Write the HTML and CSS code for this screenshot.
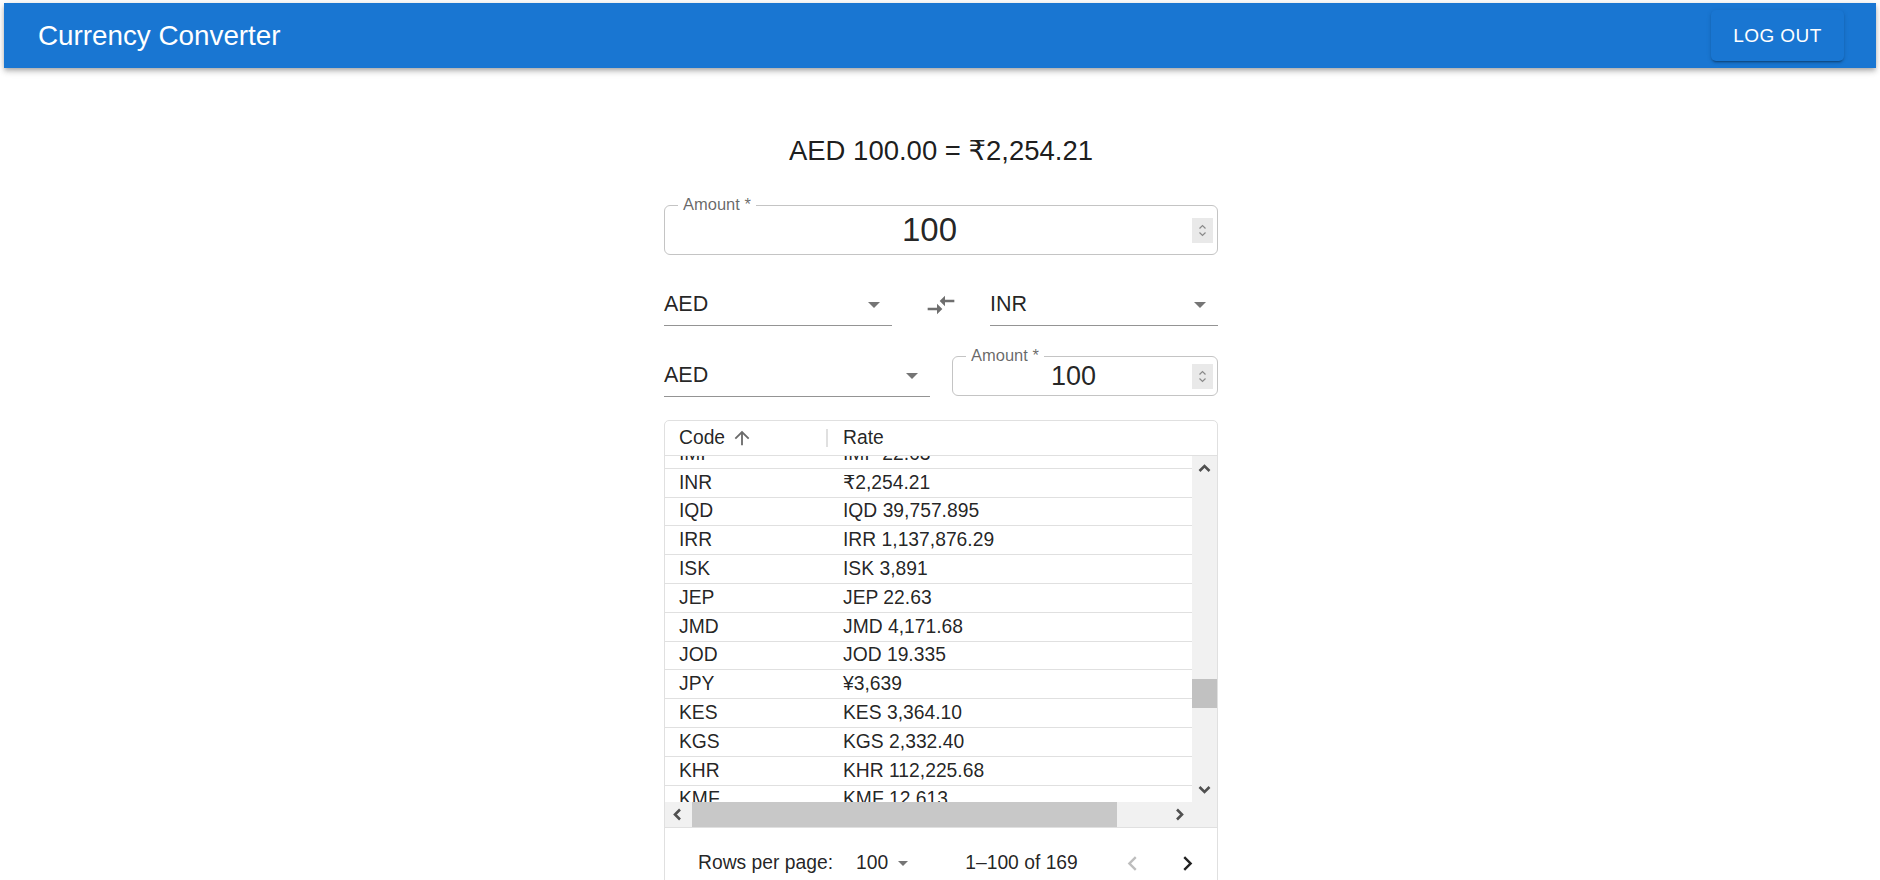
FILE: index.html
```html
<!DOCTYPE html>
<html lang="en">
<head>
<meta charset="utf-8">
<title>Currency Converter</title>
<link rel="stylesheet" href="styles.css">
</head>
<body>
<header class="appbar">
  <div class="title">Currency Converter</div>
  <button class="logout">LOG OUT</button>
</header>
<main class="page">
  <section class="converter">
    <h1 class="result">AED 100.00 = ₹2,254.21</h1>

    <div class="field field-lg">
      <span class="field-label">Amount *</span>
      <span class="field-value">100</span>
      <svg class="spinner" viewBox="0 0 21 25"><rect width="21" height="25" fill="#e9e9e9"/><path d="M7.5 10.5 L10.5 7.5 L13.5 10.5" fill="none" stroke="#8a8a8a" stroke-width="1.2"/><path d="M7.5 14.5 L10.5 17.5 L13.5 14.5" fill="none" stroke="#8a8a8a" stroke-width="1.2"/></svg>
    </div>

    <div class="pair">
      <div class="select"><span class="val">AED</span><span class="caret"></span></div>
      <div class="swap"><svg viewBox="0 0 24 24"><path d="M9.01 14H2v2h7.01v3L13 15l-3.99-4v3zm5.98-1v-3H22V8h-7.01V5L11 9l3.99 4z"/></svg></div>
      <div class="select"><span class="val">INR</span><span class="caret"></span></div>
    </div>

    <div class="row3">
      <div class="select"><span class="val">AED</span><span class="caret"></span></div>
      <div class="field field-sm">
        <span class="field-label">Amount *</span>
        <span class="field-value">100</span>
        <svg class="spinner" viewBox="0 0 21 25"><rect width="21" height="25" fill="#e9e9e9"/><path d="M7.5 10.5 L10.5 7.5 L13.5 10.5" fill="none" stroke="#8a8a8a" stroke-width="1.2"/><path d="M7.5 14.5 L10.5 17.5 L13.5 14.5" fill="none" stroke="#8a8a8a" stroke-width="1.2"/></svg>
      </div>
    </div>

    <div class="grid">
      <div class="grid-head">
        <div class="hcell-code">Code<svg class="sort" viewBox="0 0 24 24"><path d="M4 12l1.41 1.41L11 7.83V20h2V7.83l5.58 5.59L20 12l-8-8-8 8z"/></svg></div>
        <span class="sep"></span>
        <div class="hcell-rate">Rate</div>
      </div>
      <div class="grid-body">
        <div class="viewport">
          <div class="rows">
            <div class="row"><span class="c1">IMP</span><span class="c2">IMP 22.63</span></div>
            <div class="row"><span class="c1">INR</span><span class="c2">₹2,254.21</span></div>
            <div class="row"><span class="c1">IQD</span><span class="c2">IQD 39,757.895</span></div>
            <div class="row"><span class="c1">IRR</span><span class="c2">IRR 1,137,876.29</span></div>
            <div class="row"><span class="c1">ISK</span><span class="c2">ISK 3,891</span></div>
            <div class="row"><span class="c1">JEP</span><span class="c2">JEP 22.63</span></div>
            <div class="row"><span class="c1">JMD</span><span class="c2">JMD 4,171.68</span></div>
            <div class="row"><span class="c1">JOD</span><span class="c2">JOD 19.335</span></div>
            <div class="row"><span class="c1">JPY</span><span class="c2">¥3,639</span></div>
            <div class="row"><span class="c1">KES</span><span class="c2">KES 3,364.10</span></div>
            <div class="row"><span class="c1">KGS</span><span class="c2">KGS 2,332.40</span></div>
            <div class="row"><span class="c1">KHR</span><span class="c2">KHR 112,225.68</span></div>
            <div class="row"><span class="c1">KMF</span><span class="c2">KMF 12,613</span></div>
            <div class="row"><span class="c1">KPW</span><span class="c2">KPW 24,502.7</span></div>
          </div>
        </div>
        <div class="vscroll">
          <svg class="sb-btn" viewBox="0 0 25 25"><polyline points="7.5,15 12.5,10 17.5,15" fill="none" stroke="#505050" stroke-width="2.6"/></svg>
          <div class="vtrack"><div class="vthumb"></div></div>
          <svg class="sb-btn" viewBox="0 0 25 25"><polyline points="7.5,10 12.5,15 17.5,10" fill="none" stroke="#505050" stroke-width="2.6"/></svg>
        </div>
        <div class="hscroll">
          <svg class="sb-btn" viewBox="0 0 25 25"><polyline points="15,7.5 10,12.5 15,17.5" fill="none" stroke="#505050" stroke-width="2.6"/></svg>
          <div class="htrack"><div class="hthumb"></div></div>
          <svg class="sb-btn" viewBox="0 0 25 25"><polyline points="10,7.5 15,12.5 10,17.5" fill="none" stroke="#505050" stroke-width="2.6"/></svg>
        </div>
        <div class="corner"></div>
      </div>
      <div class="grid-foot">
        <span class="rpp">Rows per page:</span>
        <span class="page-select">100<span class="caret caret-sm"></span></span>
        <span class="shown">1–100 of 169</span>
        <span class="pbtn disabled"><svg viewBox="0 0 24 24"><path d="M15.41 7.41 14 6l-6 6 6 6 1.41-1.41L10.83 12z"/></svg></span>
        <span class="pbtn"><svg viewBox="0 0 24 24"><path d="M10 6 8.59 7.41 13.17 12l-4.58 4.59L10 18l6-6z"/></svg></span>
      </div>
    </div>
  </section>
</main>
</body>
</html>
```

FILE: styles.css
```css
html, body {
  margin: 0;
  padding: 0;
  overflow: hidden;
  background: #fff;
}

body {
  font-family: "Liberation Sans", Arial, "DejaVu Sans", sans-serif;
  color: rgba(0, 0, 0, 0.87);
}

.appbar {
  margin: 3px 4px 0;
  height: 65px;
  box-sizing: border-box;
  padding: 0 32px 0 34px;
  background: #1976d2;
  color: #fff;
  display: flex;
  align-items: center;
  justify-content: space-between;
  box-shadow: 0 2px 4px -1px rgba(0,0,0,.2), 0 4px 5px 0 rgba(0,0,0,.14), 0 1px 10px 0 rgba(0,0,0,.12);
}

.title {
  font-size: 27.8px;
  line-height: 32px;
}

.logout {
  font-family: inherit;
  font-size: 19px;
  letter-spacing: 0.4px;
  color: #fff;
  background: #1976d2;
  border: 0;
  border-radius: 5px;
  width: 133px;
  height: 51px;
  padding: 0;
  box-shadow: 0 3px 1px -2px rgba(0,0,0,.2), 0 2px 2px 0 rgba(0,0,0,.14), 0 1px 5px 0 rgba(0,0,0,.12);
}

.page {
  display: flex;
  justify-content: center;
  padding-top: 67px;
  padding-left: 2px;
}

.converter {
  width: 554px;
  display: flex;
  flex-direction: column;
}

.result {
  margin: 0;
  font-size: 27.5px;
  font-weight: 400;
  line-height: 32px;
  text-align: center;
  color: rgba(0, 0, 0, 0.9);
}

/* outlined number field */
.field {
  position: relative;
  box-sizing: border-box;
  border: 1px solid #c4c4c4;
  border-radius: 6px;
  display: flex;
  align-items: center;
  padding: 0 4px 0 14px;
}

.field-lg {
  margin-top: 38px;
  height: 50px;
}

.field-sm {
  height: 40px;
}

.field-label {
  position: absolute;
  top: -11px;
  left: 13px;
  padding: 0 5px;
  background: #fff;
  font-size: 16.5px;
  line-height: 18px;
  color: rgba(0, 0, 0, 0.6);
}

.field-value {
  flex: 1;
  text-align: center;
  margin-right: 12px;
}

.field-lg .field-value {
  font-size: 33px;
}

.field-sm .field-value {
  font-size: 27px;
}

.spinner {
  width: 21px;
  height: 25px;
  display: block;
}

/* standard selects */
.select {
  display: flex;
  align-items: center;
  line-height: 29px;
  padding-bottom: 6px;
  border-bottom: 1px solid rgba(0, 0, 0, 0.42);
  font-size: 21.5px;
}

.select .val {
  flex: 1;
}

.caret {
  width: 0;
  height: 0;
  border-left: 6px solid transparent;
  border-right: 6px solid transparent;
  border-top: 6px solid #757575;
  margin-right: 12px;
}

.pair {
  margin-top: 35px;
  display: flex;
  align-items: flex-end;
}

.pair .select {
  width: 228px;
}

.swap {
  flex: 1;
  align-self: stretch;
  display: flex;
  justify-content: center;
  align-items: flex-start;
}

.swap svg {
  width: 32px;
  height: 32px;
  margin-top: -1px;
  fill: #6e6e6e;
}

.row3 {
  margin-top: 30px;
  display: grid;
  grid-template-columns: 1fr 1fr;
  column-gap: 22px;
  align-items: end;
}

.row3 .select {
  margin-bottom: -1px;
}

/* data grid */
.grid {
  margin-top: 24px;
  border: 1px solid #e0e0e0;
  border-radius: 5px;
  font-size: 19.3px;
  color: rgba(0, 0, 0, 0.87);
}

.grid-head {
  height: 34px;
  display: flex;
  align-items: center;
  border-bottom: 1px solid #e0e0e0;
}

.hcell-code {
  width: 161px;
  box-sizing: border-box;
  padding-left: 14px;
  display: flex;
  align-items: center;
}

.sort {
  width: 22px;
  height: 22px;
  margin-left: 6px;
  fill: #6b6b6b;
}

.sep {
  width: 2px;
  height: 18px;
  background: #e0e0e0;
}

.hcell-rate {
  padding-left: 15px;
}

.grid-body {
  display: grid;
  grid-template-columns: 1fr 25px;
  grid-template-rows: 346px 25px;
}

.viewport {
  overflow: hidden;
}

.rows {
  margin-top: -16px;
}

.row {
  display: flex;
  align-items: center;
  height: 28.8px;
  box-sizing: border-box;
  border-bottom: 1px solid #e0e0e0;
}

.c1 {
  width: 163px;
  box-sizing: border-box;
  padding-left: 14px;
}

.c2 {
  padding-left: 15px;
}

.sb-btn {
  width: 25px;
  height: 25px;
  display: block;
  flex: none;
}

.vscroll {
  background: #f1f1f1;
  display: flex;
  flex-direction: column;
}

.vtrack {
  flex: 1;
}

.vthumb {
  margin-top: 198px;
  height: 29px;
  background: #c1c1c1;
}

.hscroll {
  background: #f1f1f1;
  display: flex;
}

.htrack {
  flex: 1;
  display: flex;
  align-items: stretch;
}

.hthumb {
  margin-left: 2px;
  width: 425px;
  background: #c8c8c8;
}

.corner {
  background: #f1f1f1;
}

.grid-foot {
  border-top: 1px solid #e0e0e0;
  height: 70px;
  display: flex;
  align-items: center;
}

.rpp {
  margin-left: 33px;
}

.page-select {
  margin-left: 23px;
  display: flex;
  align-items: center;
}

.caret-sm {
  margin-left: 10px;
  margin-right: 0;
  border-left-width: 5.5px;
  border-right-width: 5.5px;
  border-top-width: 5.5px;
}

.shown {
  margin-left: 57px;
}

.pbtn {
  width: 40px;
  height: 40px;
  display: flex;
  align-items: center;
  justify-content: center;
  margin-left: 15px;
}

.pbtn.disabled {
  margin-left: 35px;
}

.pbtn svg {
  width: 29px;
  height: 29px;
  fill: rgba(0, 0, 0, 0.87);
}

.pbtn.disabled svg {
  fill: rgba(0, 0, 0, 0.26);
}
```
